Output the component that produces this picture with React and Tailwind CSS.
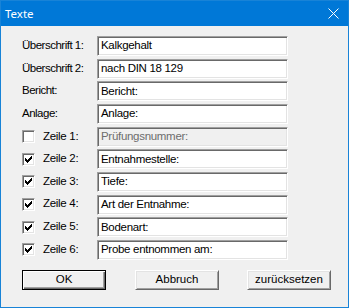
import React from "react";

const font = { fontFamily: '"Liberation Sans", Arial, sans-serif' };

const sunken =
  "border border-t-[#a0a0a0] border-l-[#a0a0a0] border-b-white border-r-white shadow-[inset_1px_1px_0_#696969,inset_-1px_-1px_0_#e3e3e3]";

const TextBox = ({ value, disabled }) => (
  <div
    className={`h-[20px] w-[191px] flex items-center pl-[3px] text-[11.5px] tracking-[-0.3px] ${sunken} ${
      disabled ? "bg-[#f0f0f0] text-[#6d6d6d]" : "bg-white text-black"
    }`}
  >
    {value}
  </div>
);

const CheckBox = ({ checked }) => (
  <div className={`w-[13px] h-[13px] bg-white relative shrink-0 ${sunken}`}>
    {checked && (
      <svg
        width="13"
        height="13"
        viewBox="0 0 13 13"
        className="absolute -left-px -top-px"
        shapeRendering="crispEdges"
      >
        <path
          d="M3 5h1v3h-1z M4 6h1v3h-1z M5 7h1v3h-1z M6 6h1v3h-1z M7 5h1v3h-1z M8 4h1v3h-1z M9 3h1v3h-1z"
          fill="#000"
        />
      </svg>
    )}
  </div>
);

const Button = ({ children, isDefault, className = "" }) => (
  <button
    className={`h-[20px] w-[84px] bg-[#f0f0f0] text-[11.5px] text-black flex items-center justify-center ${
      isDefault
        ? "border border-black shadow-[inset_1px_1px_0_#fff,inset_-1px_-1px_0_#696969,inset_-2px_-2px_0_#a0a0a0]"
        : "border border-t-white border-l-white border-b-[#696969] border-r-[#696969] shadow-[inset_1px_1px_0_#e3e3e3,inset_-1px_-1px_0_#a0a0a0]"
    } ${className}`}
    style={font}
  >
    {children}
  </button>
);

const App = () => {
  const headers = [
    { label: "Überschrift 1:", value: "Kalkgehalt" },
    { label: "Überschrift 2:", value: "nach DIN 18 129" },
    { label: "Bericht:", value: "Bericht:" },
    { label: "Anlage:", value: "Anlage:" },
  ];
  const lines = [
    { label: "Zeile 1:", value: "Prüfungsnummer:", checked: false },
    { label: "Zeile 2:", value: "Entnahmestelle:", checked: true },
    { label: "Zeile 3:", value: "Tiefe:", checked: true },
    { label: "Zeile 4:", value: "Art der Entnahme:", checked: true },
    { label: "Zeile 5:", value: "Bodenart:", checked: true },
    { label: "Zeile 6:", value: "Probe entnommen am:", checked: true },
  ];

  return (
    <div
      className="w-[349px] h-[308px] border border-[#1883d7] bg-[#f0f0f0] flex flex-col"
      style={font}
    >
      {/* Title bar */}
      <div className="h-[25px] bg-[#0078d7] flex items-center justify-between pl-[4px] pr-[9px] shrink-0">
        <span className="text-white text-[11.5px]" style={{ fontFamily: '"Noto Sans", sans-serif' }}>
          Texte
        </span>
        <svg width="11" height="11" viewBox="0 0 11 11">
          <path d="M0.5 0.5L10.5 10.5M10.5 0.5L0.5 10.5" stroke="#fff" strokeWidth="1" />
        </svg>
      </div>

      {/* Fields */}
      <div className="flex flex-col gap-[2.67px] pl-[21px] pt-[10px]">
        {headers.map((row) => (
          <div key={row.label} className="flex items-center h-[20px]">
            <span className="w-[75px] text-[11.5px] tracking-[-0.5px] text-black pb-px">
              {row.label}
            </span>
            <TextBox value={row.value} />
          </div>
        ))}
        {lines.map((row, i) => (
          <div key={row.label} className="flex items-center h-[20px]">
            <CheckBox checked={row.checked} />
            <span className="w-[62px] pl-[8px] text-[11.5px] tracking-[-0.3px] text-black pb-px">
              {row.label}
            </span>
            <TextBox value={row.value} disabled={i === 0} />
          </div>
        ))}
      </div>

      {/* Buttons */}
      <div className="flex pl-[21px] pt-[10px]">
        <Button isDefault>OK</Button>
        <Button className="ml-[29px]">Abbruch</Button>
        <Button className="ml-[28px]">zurücksetzen</Button>
      </div>
    </div>
  );
};

export default App;
